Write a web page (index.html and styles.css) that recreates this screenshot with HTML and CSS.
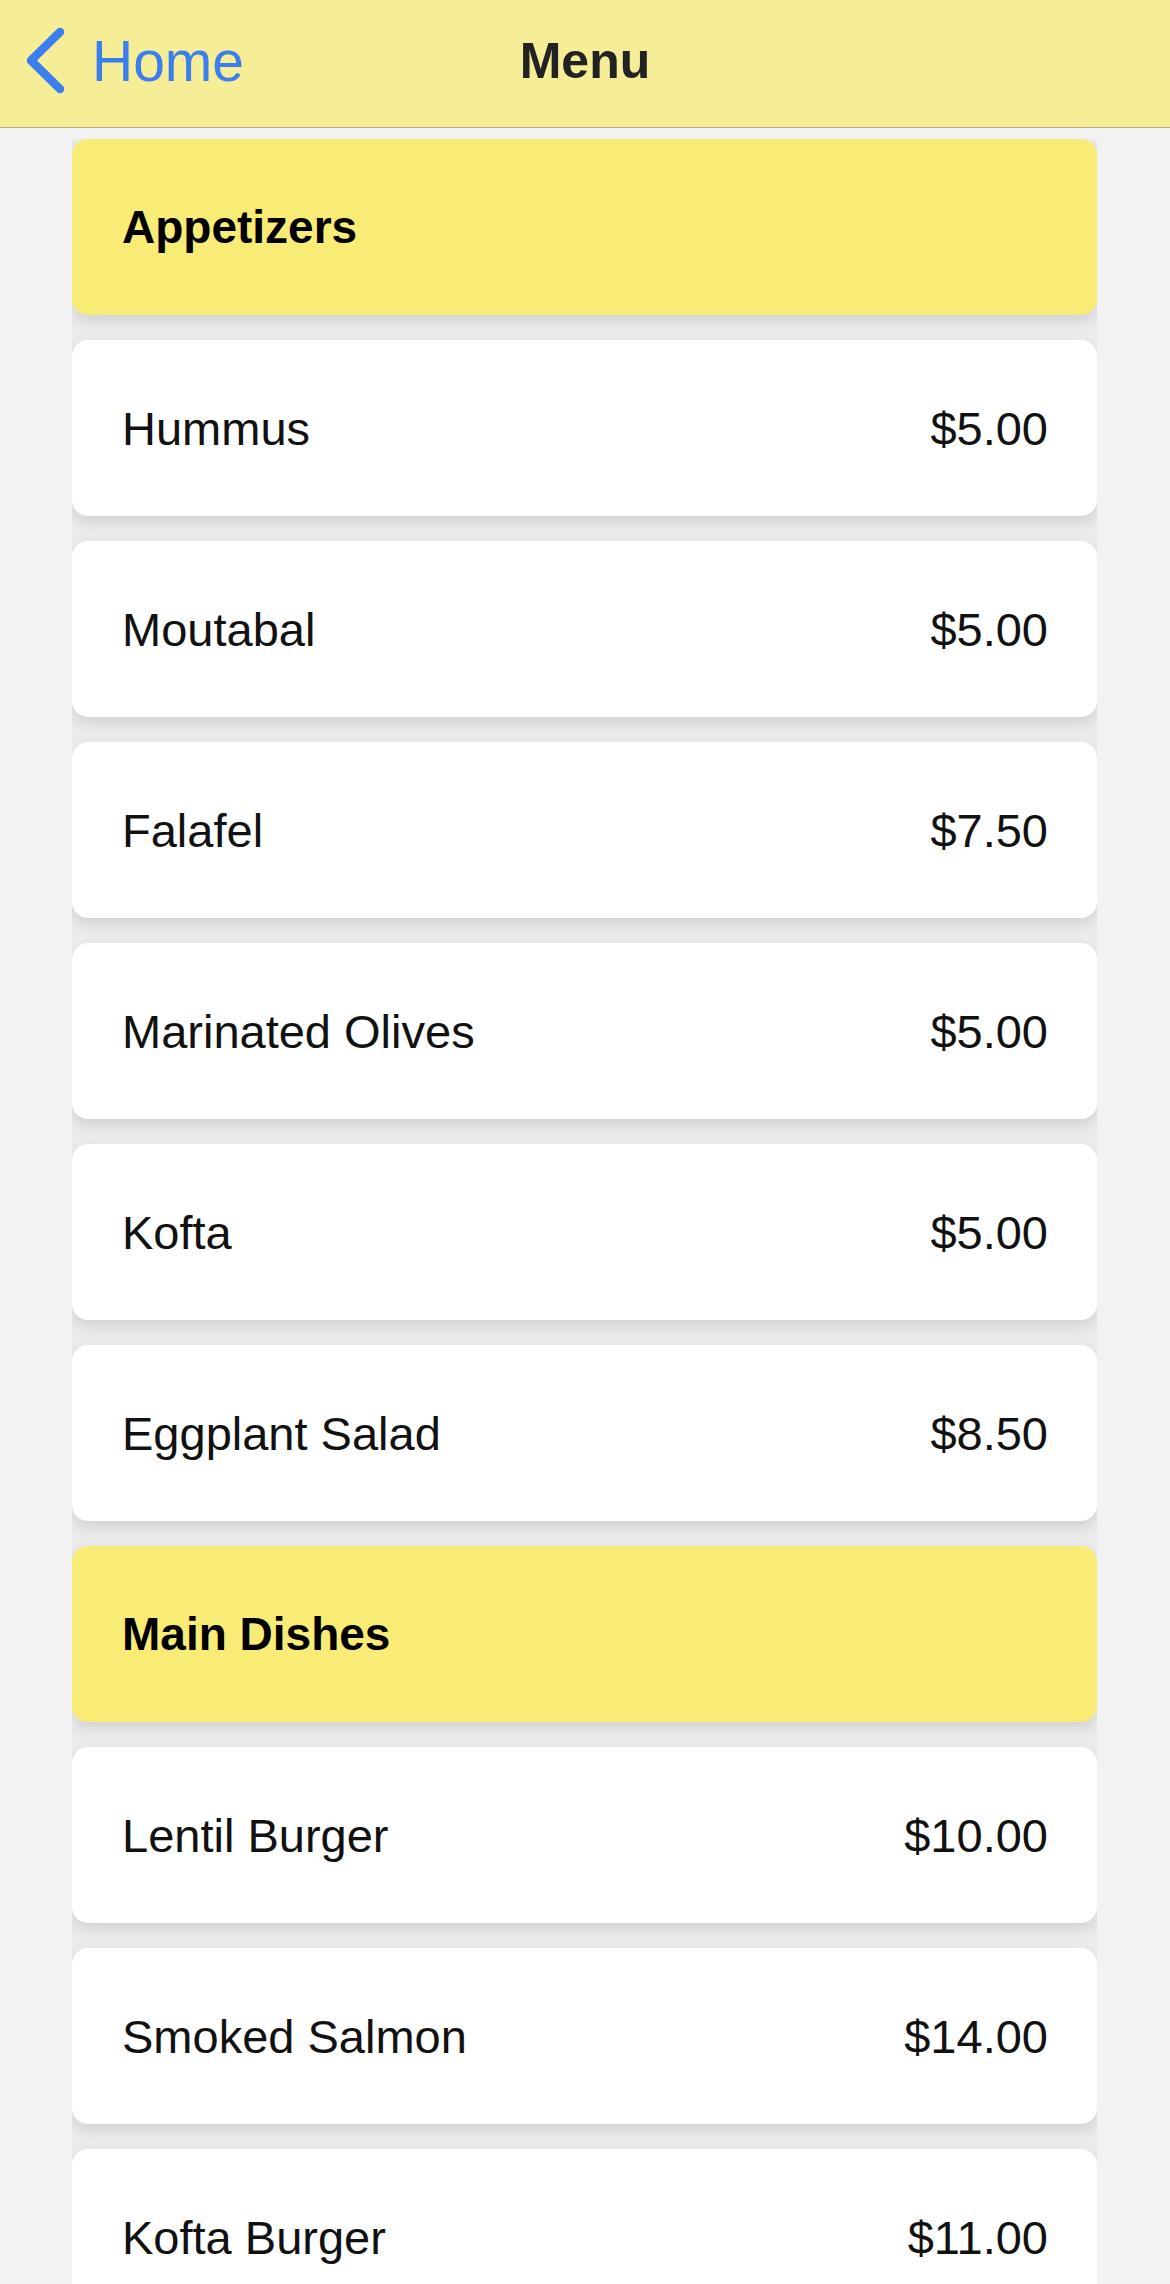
FILE: index.html
```html
<!DOCTYPE html>
<html lang="en">
<head>
<meta charset="utf-8">
<title>Menu</title>
<link rel="stylesheet" href="styles.css">
</head>
<body>
<header class="navbar">
  <div class="back">
    <svg class="chevron" width="40" height="70" viewBox="0 0 40 70" aria-hidden="true">
      <polyline points="35,6 6,34.5 35,63" fill="none" stroke="#3a7ef0" stroke-width="8.5" stroke-linecap="round" stroke-linejoin="round"/>
    </svg>
    <span class="back-label">Home</span>
  </div>
  <div class="title">Menu</div>
</header>
<main class="list">
  <div class="card section"><span class="section-title">Appetizers</span></div>
  <div class="card item"><span>Hummus</span><span>$5.00</span></div>
  <div class="card item"><span>Moutabal</span><span>$5.00</span></div>
  <div class="card item"><span>Falafel</span><span>$7.50</span></div>
  <div class="card item"><span>Marinated Olives</span><span>$5.00</span></div>
  <div class="card item"><span>Kofta</span><span>$5.00</span></div>
  <div class="card item"><span>Eggplant Salad</span><span>$8.50</span></div>
  <div class="card section"><span class="section-title">Main Dishes</span></div>
  <div class="card item"><span>Lentil Burger</span><span>$10.00</span></div>
  <div class="card item"><span>Smoked Salmon</span><span>$14.00</span></div>
  <div class="card item"><span>Kofta Burger</span><span>$11.00</span></div>
</main>
</body>
</html>
```
FILE: styles.css
```css
html, body {
  margin: 0;
  padding: 0;
}
body {
  background: #f2f2f2;
  font-family: "Liberation Sans", Arial, sans-serif;
  color: #111;
  overflow: hidden;
}
.navbar {
  position: relative;
  height: 127px;
  background: #f6ee96;
  border-bottom: 1px solid #b3ab88;
  display: flex;
  align-items: center;
  justify-content: center;
  box-sizing: content-box;
}
.back {
  position: absolute;
  left: 25px;
  top: 25px;
  display: flex;
  align-items: center;
  gap: 27px;
}
.chevron {
  display: block;
}
.back-label {
  font-size: 57px;
  color: #3a7ef0;
  line-height: 70px;
  margin-top: 1px;
}
.title {
  font-size: 50px;
  font-weight: 700;
  color: #222;
  margin-top: -6px;
}
.list {
  margin: 11px 73px 0 72px;
  display: flex;
  flex-direction: column;
  gap: 25px;
  background: #ebebeb;
  overflow: hidden;
}
.card {
  height: 176px;
  border-radius: 16px;
  box-sizing: border-box;
  padding: 0 49px 0 50px;
  display: flex;
  align-items: center;
  justify-content: space-between;
  box-shadow: 0 6px 14px rgba(0, 0, 0, 0.11);
  flex-shrink: 0;
}
.section {
  background: #f8ec77;
}
.section-title {
  font-size: 46px;
  font-weight: 700;
  color: #000;
}
.item {
  background: #ffffff;
  font-size: 47px;
  color: #111;
}
```
